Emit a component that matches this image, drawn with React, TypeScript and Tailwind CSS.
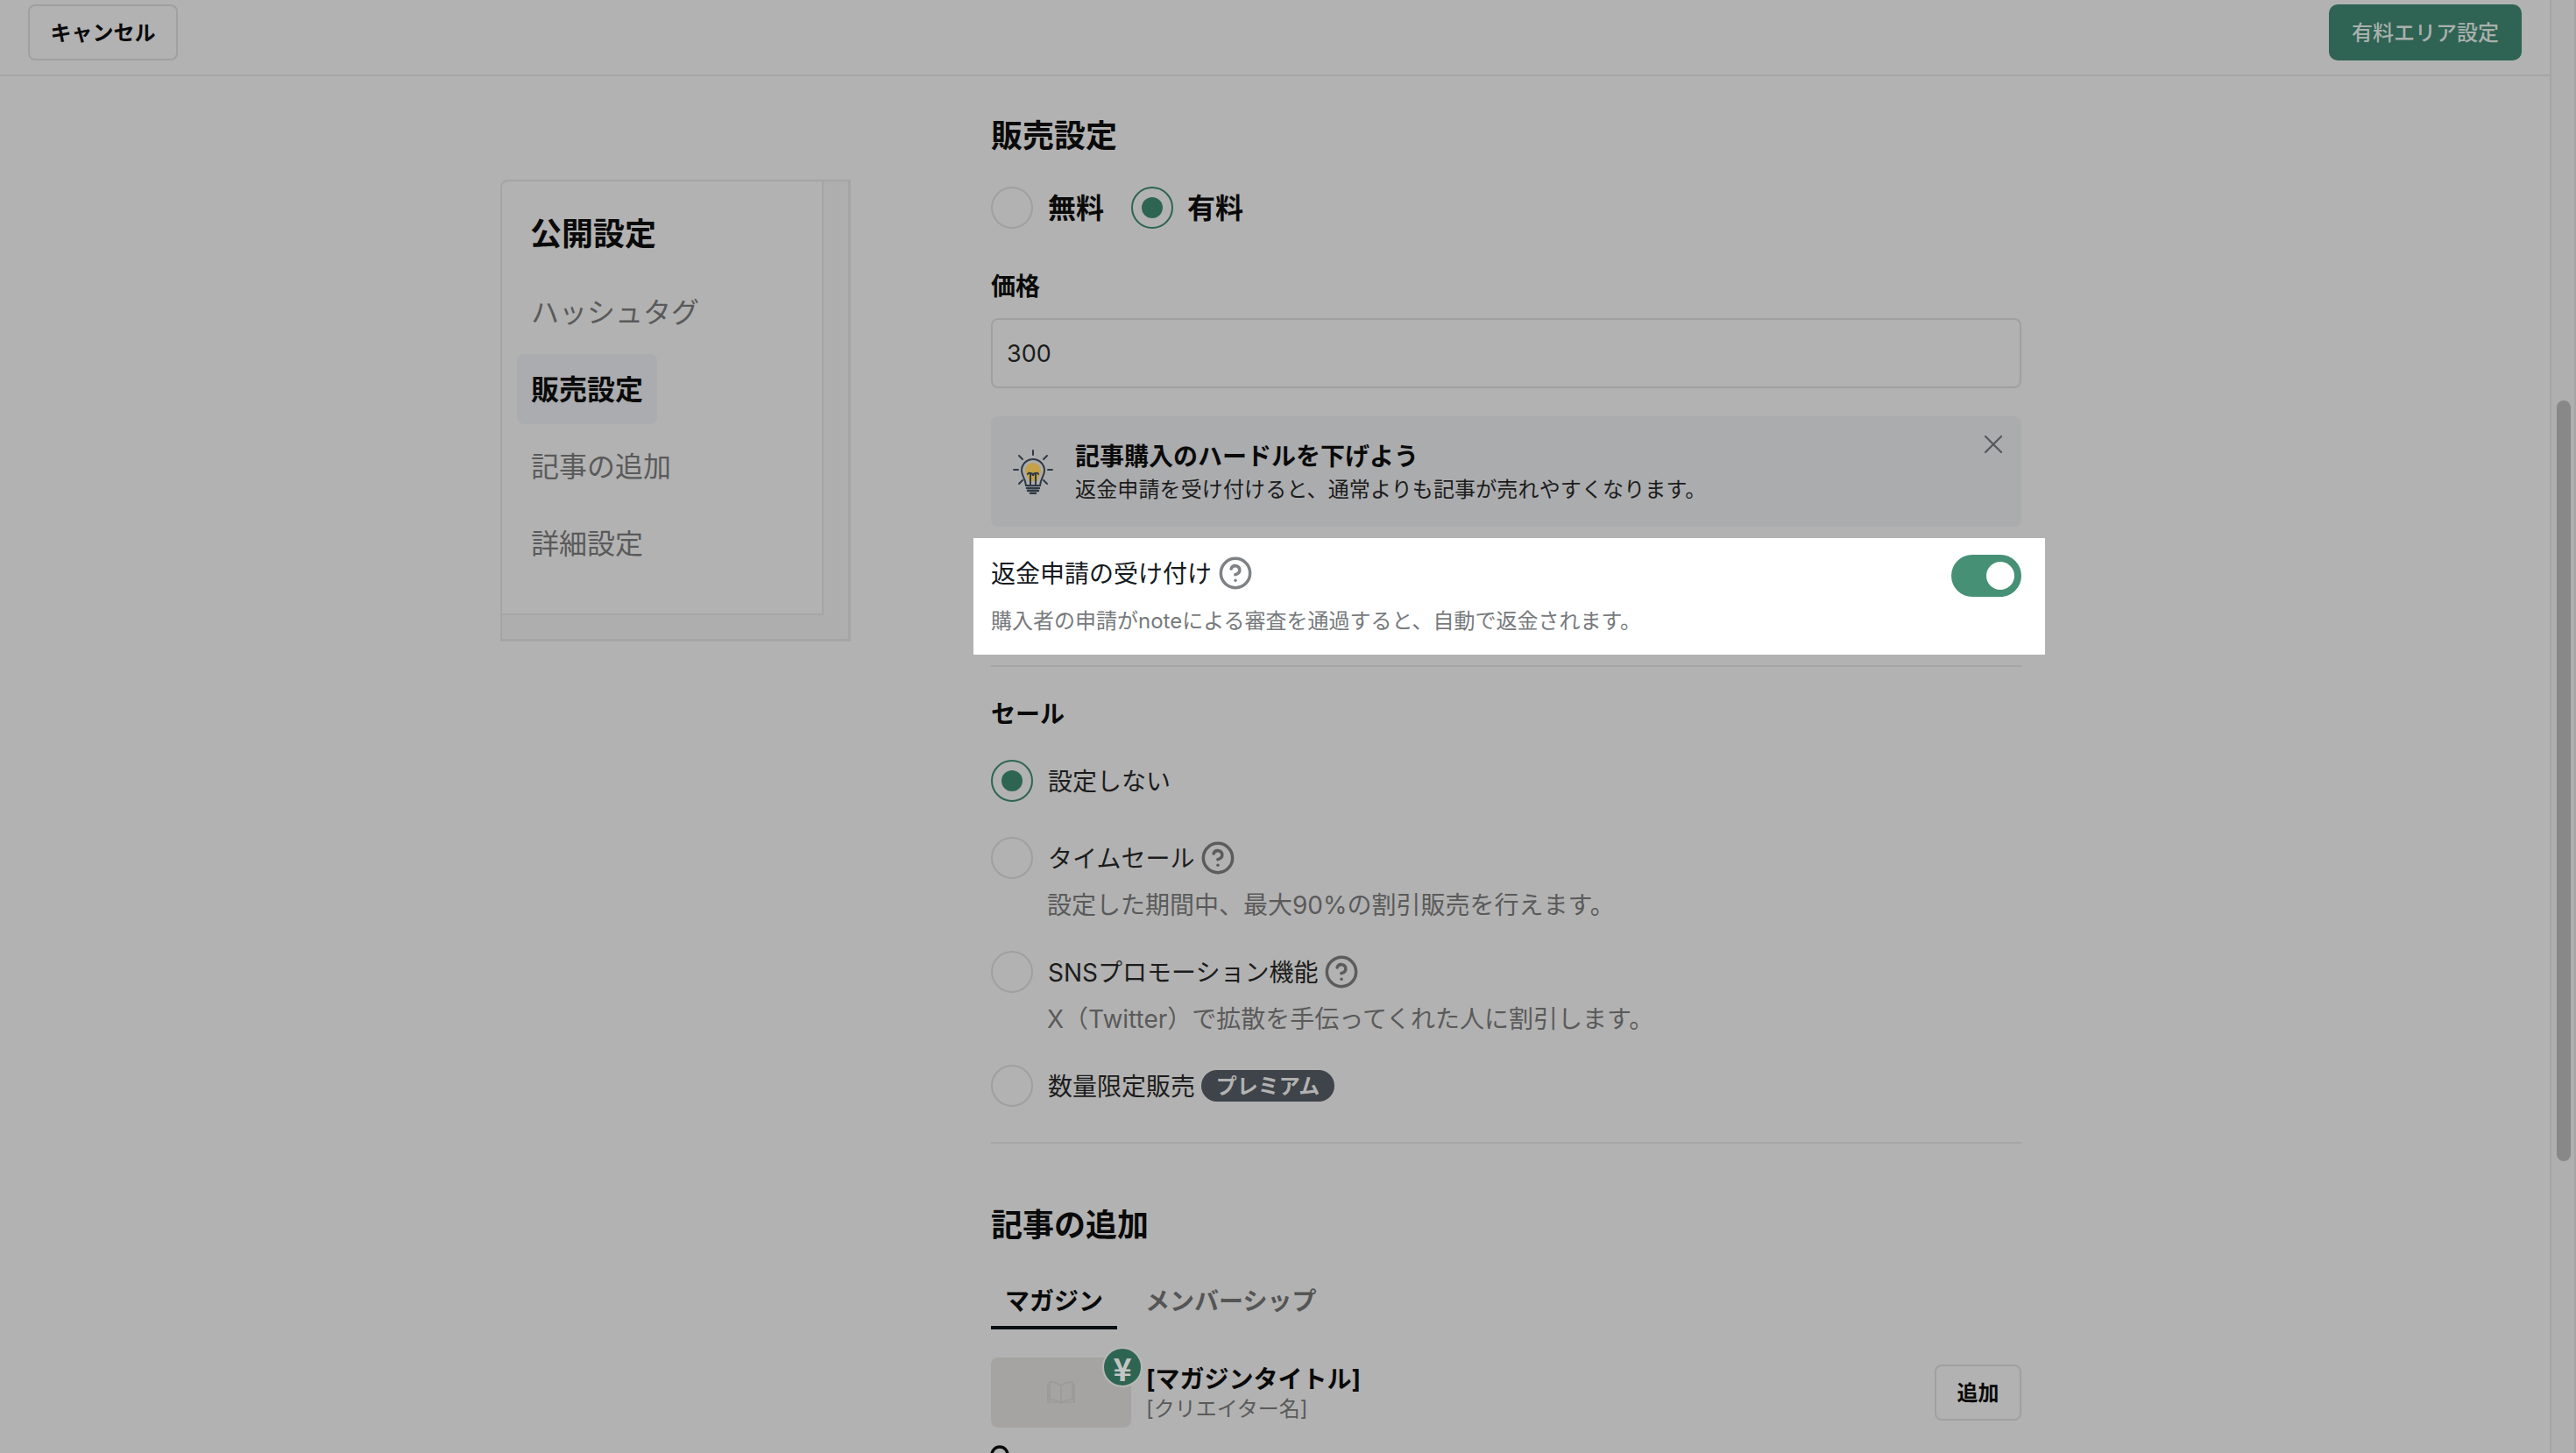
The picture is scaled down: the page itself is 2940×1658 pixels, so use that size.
import { CircleHelp, X } from "lucide-react";

const FONT = "[font-family:Inter,'Noto_Sans_CJK_JP',sans-serif]";

const NAV_ITEMS = [
  { label: "ハッシュタグ", active: false },
  { label: "販売設定", active: true },
  { label: "記事の追加", active: false },
  { label: "詳細設定", active: false },
];

function Radio({ checked = false }: { checked?: boolean }) {
  return (
    <span
      className={
        checked
          ? "flex h-12 w-12 shrink-0 items-center justify-center rounded-full border-2 border-[#2e6552]"
          : "flex h-12 w-12 shrink-0 items-center justify-center rounded-full border-2 border-[#a0a0a0]"
      }
    >
      {checked && <span className="h-6 w-6 rounded-full bg-[#2e6552]" />}
    </span>
  );
}

function Help({ className }: { className: string }) {
  return <CircleHelp className={className} strokeWidth={2.1} />;
}

function Bulb() {
  return (
    <svg className="h-[51px] w-[46px] shrink-0" viewBox="0 0 46 51" fill="none" stroke="#2f3a44" strokeWidth="2" strokeLinecap="round">
      <path d="M23 1v5M1 23h5M40 23h5M7 7l4 4M39 7l-4 4M7 39l4-4M39 39l-4-4" />
      <path d="M14 24a9 9 0 0 1 18 0c0 5-3 6-4 12H18c-1-6-4-7-4-12Z" fill="#c4a24a" stroke="none" />
      <path d="M10 24a13 13 0 0 1 26 0c0 6-4 8-5 17H15c-1-9-5-11-5-17Z" />
      <path d="M20 40V27M26 40V27M20 27a3 3 0 0 1 3 3 3 3 0 0 1 3-3M20 27a2 2 0 0 0-3 1M26 27a2 2 0 0 1 3 1" />
      <path d="M16 44h14M17 47h12" strokeWidth="2.4" />
      <path d="M20 50h6" strokeWidth="2.4" />
    </svg>
  );
}

function Sidebar() {
  return (
    <nav className="mt-[118px] flex h-[527px] w-[400px] shrink-0 items-start rounded-tl-lg border-2 border-r-[3px] border-b-[3px] border-[#a5a5a5] bg-[#aeaeae]">
      <div className="h-[495px] w-[367px] rounded-tl-lg border-r-2 border-b-2 border-[#a5a5a5] bg-[#b2b2b2] pt-[34px]">
        <div className="pl-8 text-[36px] leading-[52px] font-bold text-[#0a0a0a]">公開設定</div>
        <ul className="mt-[23px] ml-[17px] flex flex-col gap-2">
          {NAV_ITEMS.map((item) => (
            <li
              key={item.label}
              className={
                item.active
                  ? "flex h-20 w-fit items-center rounded-lg bg-[#aaacaf] px-4 pt-0.5 text-[32px] font-bold text-[#0a0a0a]"
                  : "flex h-20 w-fit items-center rounded-lg px-4 pt-0.5 text-[32px] text-[#5a5a5a]"
              }
            >
              {item.label}
            </li>
          ))}
        </ul>
      </div>
    </nav>
  );
}

function SaleOption({ label, checked, help, desc }: { label: string; checked?: boolean; help?: boolean; desc?: string }) {
  return (
    <div>
      <div className="flex h-12 items-center gap-[17px]">
        <Radio checked={checked} />
        <span className="flex items-center text-[28px] text-[#1c1c1c]">
          <span className="pt-0.5">{label}</span>
          {help && <Help className="ml-[7px] h-10 w-10 text-[#5c5c5c]" />}
        </span>
      </div>
      {desc && <p className="mt-2.5 pl-16 text-[28px] leading-10 text-[#5a5a5a]">{desc}</p>}
    </div>
  );
}

export default function App() {
  return (
    <div className={`flex h-[1658px] w-[2940px] overflow-hidden bg-[#b2b2b2] text-[#0a0a0a] ${FONT}`}>
      <div className="w-[2910px] shrink-0">
        <header className="flex h-[87px] items-start justify-between border-b-2 border-[#a5a5a5] pt-[5px] pr-8 pl-8">
          <button className="h-16 w-[171px] rounded-lg border-2 border-[#a0a0a0] pt-0.5 text-[24px] font-bold text-[#0a0a0a]">キャンセル</button>
          <button className="h-16 w-[220px] rounded-[10px] bg-[#2f6353] pt-0.5 text-[24px] font-medium text-[#a9b0ad]">有料エリア設定</button>
        </header>

        <div className="flex gap-[160px] pl-[571px]">
          <Sidebar />

          <main className="w-[1176px] shrink-0 pt-[42px]">
            <h2 className="text-[36px] leading-[52px] font-bold">販売設定</h2>
            <div className="mt-8 flex h-12 items-center text-[32px] font-bold">
              <Radio />
              <span className="ml-[17px] pt-0.5">無料</span>
              <span className="ml-[31px]">
                <Radio checked />
              </span>
              <span className="ml-4 pt-0.5">有料</span>
            </div>

            <h3 className="mt-[46px] text-[28px] leading-10 font-bold">価格</h3>
            <div className="mt-4 flex h-20 items-center rounded-lg border-2 border-[#a0a0a0] pt-0.5 pl-4 text-[27px] text-[#1c1c1c]">300</div>

            <div className="relative mt-8 flex h-[126px] items-center gap-[25px] rounded-lg bg-[#abacae] pl-[25px]">
              <Bulb />
              <div className="pt-0.5">
                <p className="text-[28px] leading-10 font-bold">記事購入のハードルを下げよう</p>
                <p className="text-[24px] leading-9 tracking-[0.14px] text-[#1c1c1c]">返金申請を受け付けると、通常よりも記事が売れやすくなります。</p>
              </div>
              <X className="absolute top-3.5 right-3.5 h-9 w-9 text-[#555a5e]" strokeWidth={1.5} />
            </div>

            <section className="mt-[13px] -mr-[27px] -ml-5 flex justify-between bg-white pt-[19px] pr-[27px] pb-5 pl-5">
              <div>
                <div className="flex h-[42px] items-center text-[28px] text-[#14191e]">
                  <span className="pt-0.5">返金申請の受け付け</span>
                  <Help className="ml-[7px] h-10 w-10 text-[#7e8285]" />
                </div>
                <p className="mt-4 text-[24px] leading-9 text-[#777a7d]">購入者の申請がnoteによる審査を通過すると、自動で返金されます。</p>
              </div>
              <span className="flex h-12 w-20 items-center justify-end rounded-full bg-[#469076] pr-2">
                <span className="h-8 w-8 rounded-full bg-white" />
              </span>
            </section>

            <div className="mt-3 h-0.5 bg-[#a5a5a5]" />

            <h3 className="mt-[34px] text-[28px] leading-10 font-bold">セール</h3>
            <div className="mt-8">
              <SaleOption label="設定しない" checked />
            </div>
            <div className="mt-10">
              <SaleOption label="タイムセール" help desc="設定した期間中、最大90%の割引販売を行えます。" />
            </div>
            <div className="mt-8">
              <SaleOption label="SNSプロモーション機能" help desc="X（Twitter）で拡散を手伝ってくれた人に割引します。" />
            </div>
            <div className="mt-8 flex h-12 items-center gap-[17px]">
              <Radio />
              <span className="pt-0.5 text-[28px] text-[#1c1c1c]">数量限定販売</span>
              <span className="-ml-[10px] flex h-9 w-[152px] items-center justify-center rounded-full bg-[#3f444a] pt-0.5 text-[24px] font-bold text-[#b2b2b2]">プレミアム</span>
            </div>

            <div className="mt-10 h-0.5 bg-[#a5a5a5]" />

            <h2 className="mt-[67px] text-[36px] leading-[52px] font-bold">記事の追加</h2>
            <div className="mt-[41px] flex gap-4 text-[28px] font-bold">
              <span className="border-b-4 border-[#0a0f12] px-4 pb-2 leading-10">マガジン</span>
              <span className="px-4 pb-2 leading-10 text-[#555555]">メンバーシップ</span>
            </div>

            <div className="mt-8 flex items-center">
              <div className="relative flex h-20 w-40 shrink-0 items-center justify-center rounded-lg bg-[#a5a4a2]">
                <svg className="h-[26px] w-8" viewBox="0 0 32 26" fill="none" stroke="#9a9a9a" strokeWidth="1.6">
                  <path d="M16 5C12 2 7 1 3 1v20c4 0 9 1 13 4 4-3 9-4 13-4V1c-4 0-9 1-13 4ZM16 5v20" />
                  <path d="M3 4H1v20h12M29 4h2v20H19" />
                </svg>
                <span className="absolute top-[-12px] right-[-13px] flex h-[46px] w-[46px] items-center justify-center rounded-full border-2 border-[#b8b8b8] bg-[#2e6552] font-['Noto_Sans_CJK_JP'] text-[36px] leading-none font-bold text-[#c4c4c4]">¥</span>
              </div>
              <div className="ml-[17px] grow">
                <p className="text-[28px] leading-10 font-bold">[マガジンタイトル]</p>
                <p className="-mt-1 pt-0.5 text-[24px] leading-8 text-[#5a5a5a]">[クリエイター名]</p>
              </div>
              <button className="h-16 w-[99px] rounded-lg border-2 border-[#a0a0a0] pt-0.5 text-[24px] font-bold">追加</button>
            </div>

            <svg className="mt-5 h-8 w-8 -translate-x-px" viewBox="0 0 32 32" fill="none" stroke="#0a0a0a" strokeWidth="3.5">
              <circle cx="11" cy="11" r="9" />
            </svg>
          </main>
        </div>
      </div>

      <aside className="w-[30px] shrink-0 border-x-2 border-[#a5a5a5] bg-[#afafaf] pt-[457px] pl-1.5">
        <div className="h-[868px] w-4 rounded-full bg-[#888888]" />
      </aside>
    </div>
  );
}
